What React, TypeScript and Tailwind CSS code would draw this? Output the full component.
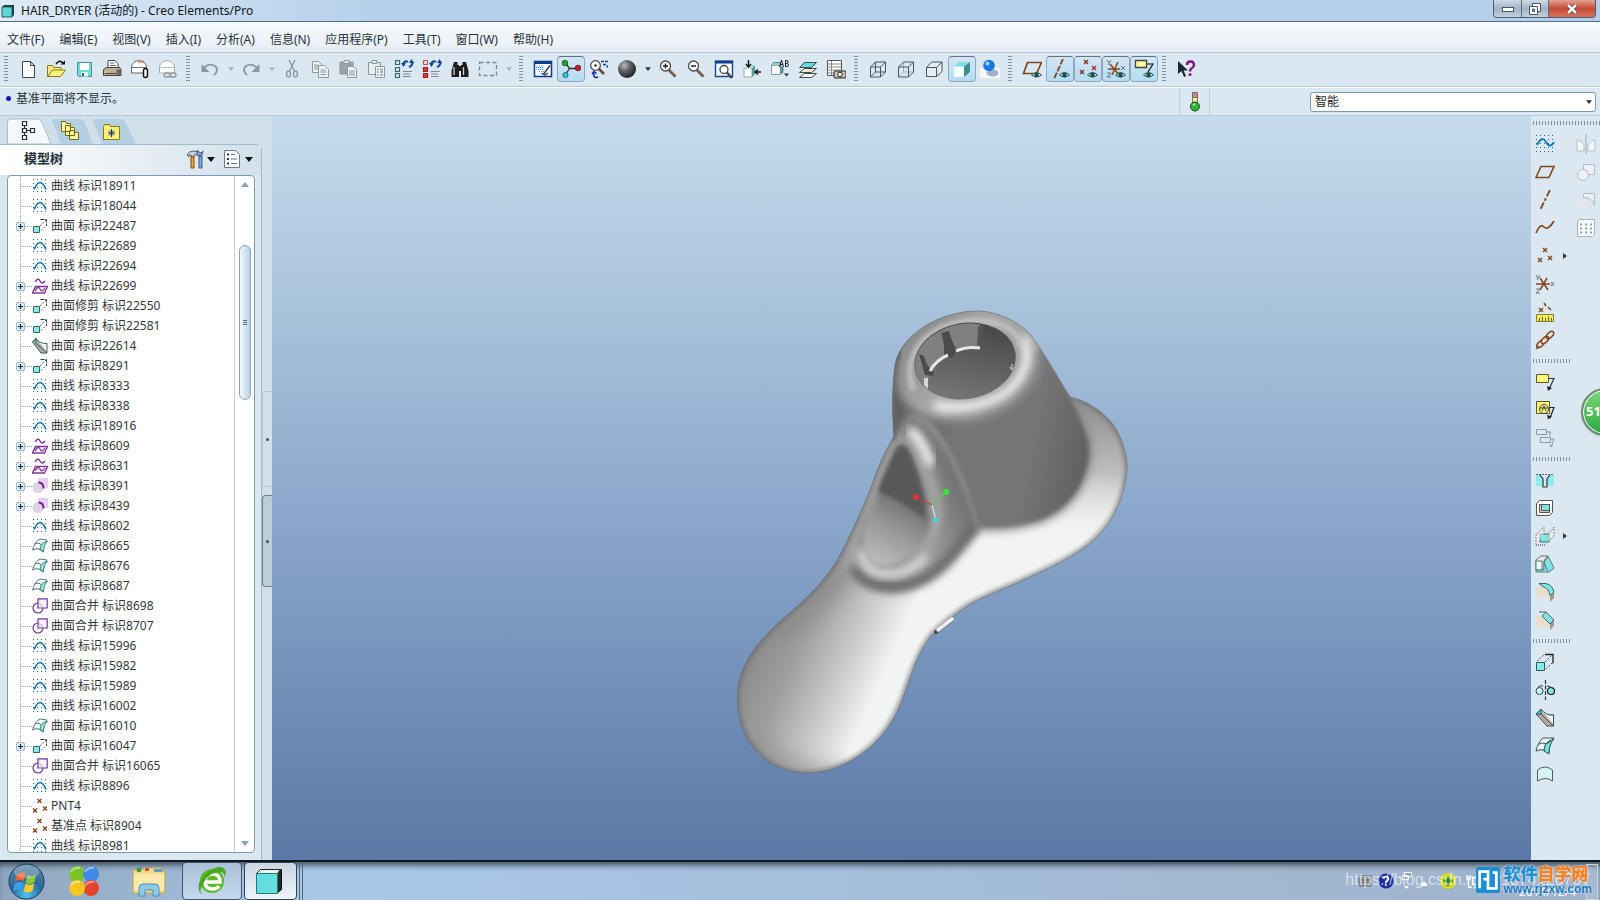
import type { ReactNode } from "react";

const ink = "#2a3540";
const brown = "#80461c";
const gray = "#8d979e";

const cross = (x: number, y: number, c = brown) => (
  <path d={`M${x - 2} ${y - 2}l4 4M${x + 2} ${y - 2}l-4 4`} stroke={c} strokeWidth="1.4" />
);
const eye = (
  <g>
    <path d="M9.500 16q5-5 10 0q-5 4-10 0z" fill="#dff0ee" stroke="#24504c" strokeWidth="1" />
    <circle cx="14.500" cy="16" r="2.300" fill="#15504c" />
  </g>
);
const gridDots = (
  <path d="M1 1.500h18M1 5.500h18M1 9.500h18M1 13.500h18M1 17.500h18" stroke="#1c5fae" strokeDasharray="1 3" />
);
const cube = (x: number, y: number, s: number) => `M${x} ${y + 5}h${s}v${s}h-${s}zM${x} ${y + 5}l5-5h${s}v${s}l-5 5M${x + s} ${y + 5}l5-5`;
const magnifier = (
  <g>
    <path d="M11 11l6.500 6.500" stroke="#5a3c34" strokeWidth="2.600" />
    <path d="M11.500 11l6 6" stroke="#d9b6a0" strokeWidth=".8" />
    <circle cx="7.500" cy="7" r="5" fill="#fff" stroke="#4a4a4a" strokeWidth="1.300" />
  </g>
);
const printerDome = (c: string) => (
  <path d="M1.500 14V8q1-6 8-6.500 6 .5 7 6.500v6z" fill="#fff" stroke={c} />
);

const icons: Record<string, ReactNode> = {
  new: <path d="M4.500 2.500h8l4 4v12h-12zM12.500 2.500v4h4" fill="#fff" stroke="#3d454c" strokeLinejoin="round" />,
  open: (
    <g>
      <path d="M1.500 17.500v-11h5l1.500 2h7v3" fill="#f6ea86" stroke="#8d7c1c" />
      <path d="M1.500 17.500l5-6.500h13l-5 6.500z" fill="#fff27a" stroke="#8d7c1c" />
      <path d="M10 5q3.500-5 7-1" fill="none" stroke="#111" strokeWidth="1.400" />
      <path d="M14.500 5.500h4.500V1.500z" fill="#111" />
    </g>
  ),
  save: (
    <g>
      <path d="M3.500 3.500h14v14H5l-1.500-1.500z" fill="#6fdcdc" stroke="#4b8f98" />
      <path d="M6 4h9v7H6z" fill="#fff" />
      <path d="M7 13h7v4.500H7z" fill="#e8f8f8" />
      <path d="M8 14h2v3H8z" fill="#2b6f78" />
    </g>
  ),
  print: (
    <g>
      <path d="M6 9V1.500h7l3 3V9z" fill="#fff" stroke="#444" />
      <path d="M8 4h4M8 6.500h6" stroke="#666" />
      <path d="M1.500 10.500l3-2h13l1.500 2v6h-17.500z" fill="#b7b09c" stroke="#46423a" />
      <path d="M3 14.500h11" stroke="#46423a" />
      <path d="M3 13h3" stroke="#e5c33b" strokeWidth="1.500" />
      <path d="M14.500 11v5.500l4.500-1.500v-5z" fill="#6d675a" />
    </g>
  ),
  printClip: (
    <g>
      {printerDome("#666")}
      <path d="M8 3h6" stroke="#d44" />
      <path d="M2 8.500h14" stroke="#777" />
      <rect x="13.500" y="9.500" width="4" height="9" rx="2" fill="#eee" stroke="#111" strokeWidth="1.400" />
    </g>
  ),
  printLink: (
    <g>
      {printerDome("#a6aeb4")}
      <path d="M2 8.500h14" stroke="#b6bec4" />
      <rect x="6" y="14" width="6" height="4" rx="2" fill="#dde3e8" stroke="#8f989e" strokeWidth="1.300" />
      <rect x="12" y="14" width="6" height="4" rx="2" fill="#dde3e8" stroke="#8f989e" strokeWidth="1.300" />
    </g>
  ),
  undo: (
    <g>
      <path d="M4 9q5-5.500 11-2q4.500 4-1 9" fill="none" stroke={gray} strokeWidth="1.900" />
      <path d="M1.500 5v8h8z" fill={gray} />
    </g>
  ),
  redo: (
    <g>
      <path d="M16 9q-5-5.500-11-2q-4.500 4 1 9" fill="none" stroke={gray} strokeWidth="1.900" />
      <path d="M18.500 5v8h-8z" fill={gray} />
    </g>
  ),
  cut: (
    <g fill="none" stroke={gray} strokeWidth="1.400">
      <path d="M7 1l5.500 11M13 1L7.500 12" />
      <ellipse cx="6.500" cy="15" rx="2" ry="3" />
      <ellipse cx="13.500" cy="15" rx="2" ry="3" />
    </g>
  ),
  copy: (
    <g fill="#eef3f7" stroke={gray}>
      <path d="M2.500 2.500h6l3 3v8h-9z" />
      <path d="M8.500 6.500h6l4 4v8h-10z" />
      <path d="M4 6h4M4 8h4M4 10h4M10.500 11h5M10.500 13h6M10.500 15.500h6" />
    </g>
  ),
  paste: (
    <g stroke={gray}>
      <path d="M2 3h13v12H2z" fill="#9aa3aa" />
      <path d="M6 1.500h5v3H6z" fill="#dfe6ea" />
      <path d="M9.500 7.500h6l3 3v8h-9z" fill="#f2f6f9" />
      <path d="M11 12h6M11 14h6M11 16h6" />
    </g>
  ),
  pasteSpecial: (
    <g stroke={gray}>
      <path d="M2.500 3.500h12v12h-12z" fill="#e6edf2" />
      <path d="M6 1.500h5v3H6z" fill="#dfe6ea" />
      <path d="M9.500 7.500h9v11h-9z" fill="#f2f6f9" />
      <path d="M11 10.500h1.500M14 10.500h3M11 13h1.500M14 13h3M11 16h1.500M14 16h3" strokeWidth="1.300" />
    </g>
  ),
  regen: (
    <g>
      <path d="M1.500 1.500h4v4h-4zM1.500 8.500h4v4h-4zM1.500 14.500h4v4h-4z" fill="#c8e6e6" stroke="#3a6670" strokeWidth="1.200" />
      <path d="M9 5q2-4 5-2M19 3q-1 4-4 5" fill="none" stroke="#12489c" strokeWidth="2" />
      <path d="M7 4h5l-2.500 4zM15 4h5l-2.500-4z" fill="#12489c" />
      <path d="M9 12.500h9M9 15h7M9 17.500h8" stroke="#7f8a92" />
    </g>
  ),
  regenRed: (
    <g>
      <path d="M1.500 1.500h4v4h-4z" fill="#f0d8d8" stroke="#a55" />
      <path d="M1.500 8.500h4v4h-4zM1.500 14.500h4v4h-4z" fill="#e33" stroke="#922" strokeWidth="1.200" />
      <path d="M9 5q2-4 5-2M19 3q-1 4-4 5" fill="none" stroke="#12489c" strokeWidth="2" />
      <path d="M7 4h5l-2.500 4zM15 4h5l-2.500-4z" fill="#12489c" />
      <path d="M9 12.500h9M9 15h7M9 17.500h8" stroke="#7f8a92" />
    </g>
  ),
  find: (
    <g fill="#1d1d1d">
      <path d="M4 3h3.500v3H9v12H1.500v-6zM12.500 3H16l2.500 9v6H11V6h1.500z" />
      <path d="M8 7h4v5H8z" />
      <path d="M4 8v8M13.500 8v8" stroke="#d8d4b8" strokeWidth="1.300" />
    </g>
  ),
  selectBox: <path d="M1.500 3.500h17v13h-17z" fill="none" stroke="#7e888f" strokeWidth="1.300" strokeDasharray="4 2.500" />,
  repaint: (
    <g>
      <path d="M1.500 2.500h17v15h-17z" fill="#f7fbff" stroke="#0e3f86" strokeWidth="1.500" />
      <path d="M1 2h18v3H1z" fill="#0e3f86" />
      <path d="M2 6h9v5H2z" fill="#cfe2f6" />
      <path d="M3 8.500h7M5 10.500h6M6 12.500h5M8 14.500h3" stroke="#5a8acc" strokeDasharray="1 1" />
      <path d="M17 6.500l-6 8M9 14.500l3 1.500 3-2" fill="none" stroke="#333" strokeWidth="1.300" />
    </g>
  ),
  spin: (
    <g>
      <path d="M4.500 4l4 5.500h8M8.500 9.500l-4 6" fill="none" stroke="#333" strokeWidth="1.300" />
      <circle cx="4" cy="4" r="2.800" fill="#1fa32c" stroke="#0b5512" strokeWidth=".8" />
      <circle cx="17" cy="9" r="2.800" fill="#c41f2b" stroke="#6d0b12" strokeWidth=".8" />
      <circle cx="4.500" cy="16" r="2.600" fill="#35c8d8" stroke="#0c5c68" strokeWidth=".8" />
    </g>
  ),
  orient: (
    <g>
      <path d="M9 9l6 6" stroke="#6b4a35" strokeWidth="2.600" />
      <circle cx="6.500" cy="6.500" r="4.800" fill="#fff" stroke="#444" strokeWidth="1.200" />
      <circle cx="6.500" cy="6.500" r="1.300" fill="#333" />
      <path d="M12 2.500h7M14 5.500h3q2 1 1 3" fill="none" stroke="#1c3d96" strokeWidth="1.500" strokeDasharray="3 1" />
      <path d="M9 18q-5 2-4-4M3 15l2-2.500 2.500 2" fill="none" stroke="#1526b0" strokeWidth="1.600" />
    </g>
  ),
  sphere: <circle cx="10" cy="10" r="9" fill="url(#sphereShade)" />,
  zoomIn: (
    <g>
      {magnifier}
      <path d="M7.500 4.500v5M5 7h5" stroke="#222" strokeWidth="1.500" />
    </g>
  ),
  zoomOut: (
    <g>
      {magnifier}
      <path d="M5 7h5" stroke="#222" strokeWidth="1.500" />
    </g>
  ),
  refit: (
    <g>
      <path d="M1.500 2.500h17v15h-17z" fill="#eef6ff" stroke="#17498c" strokeWidth="1.400" />
      <path d="M1 1.500h18v3H1z" fill="#0e3f86" />
      <path d="M12.500 13l5.500 6" stroke="#5a3c34" strokeWidth="2.400" />
      <circle cx="10" cy="10.500" r="4" fill="#fff" stroke="#444" strokeWidth="1.300" />
    </g>
  ),
  reorient: (
    <g>
      <path d="M2 9h8v9H2z" fill="#fff" stroke="#9aa" />
      <path d="M10 9l3-3v9l-3 3z" fill="#4f9d9d" />
      <path d="M2 9l3-3h8l-3 3z" fill="#9fe0e0" />
      <path d="M6.500 1v6M4 5l2.500 3L9 5M19 13h-5M16 10.500l-3 2.500 3 2.500" fill="none" stroke="#111" strokeWidth="1.400" />
    </g>
  ),
  saved: (
    <g>
      <path d="M1.500 6.500h9v9h-9z" fill="#fff" stroke="#8a9a9a" />
      <path d="M1.500 6.500l2-3h6l1 3" fill="#8fd6d6" stroke="#6a8a8a" />
      <path d="M10.500 6.500l3 2v5l-3 2" fill="#5a8a8c" />
      <path d="M9.500 8l2-7 2 7M10 5.500h3M15.500 1.500v6h2q2-1.500 0-3 1.500-1.500 0-3zM15.500 4.500h2" fill="none" stroke="#222" />
      <path d="M14 14.500h5l-2.500 3z" fill="#333" />
    </g>
  ),
  layers: (
    <g stroke="#3b4a50">
      <path d="M1.500 18.500l5-4h12l-5 4z" fill="#fff" />
      <path d="M1.500 13.500l5-4h12l-5 4z" fill="#ffe7c8" />
      <path d="M1.500 8.500l5-5h12l-5 5z" fill="#62dcdc" />
    </g>
  ),
  viewMgr: (
    <g>
      <path d="M1.500 1.500h14v15h-14z" fill="#fff" stroke="#555" />
      <path d="M2 5h13M2 8h13M2 11h13M2 14h13M5.500 2v14" stroke="#888" />
      <rect x="8" y="12" width="12" height="7" rx="1" fill="#c8bfae" stroke="#26221c" />
      <circle cx="14" cy="15.500" r="2.300" fill="#fff" stroke="#26221c" />
    </g>
  ),
  wire: (
    <g fill="none" stroke="#4b545a">
      <path d={cube(2.500, 3, 10)} />
      <path d="M7.500 3v10h10M7.500 13l-5 5" />
    </g>
  ),
  hidden: (
    <g fill="none">
      <path d="M7.500 3v10h10M7.500 13l-5 5" stroke="#a3adb4" />
      <path d={cube(2.500, 3, 10)} stroke="#4b545a" />
    </g>
  ),
  noHidden: <path d="M2.500 8.500h10v9h-10zM2.500 8.500l5-5.500h10.500l-5.500 5.500M18 3v9.500l-5.500 5" fill="#e6eef4" stroke="#4b545a" />,
  shaded: (
    <g>
      <path d="M2 7.500h10v10.500H2z" fill="#f8fdff" />
      <path d="M2 7.500l5-4.500h11l-6 4.500z" fill="#7fe0e0" />
      <path d="M12 7.500L18 3v10l-6 5z" fill="#3f8f8c" />
    </g>
  ),
  ball: (
    <g>
      <path d="M0 9h20v10H0z" fill="#f4f8fb" />
      <ellipse cx="12.500" cy="14" rx="6" ry="3.500" fill="#9fb4cc" />
      <circle cx="9" cy="6.500" r="5.800" fill="#1878e0" />
      <circle cx="7.500" cy="4.500" r="2" fill="#9fd0ff" />
    </g>
  ),
  planeEye: (
    <g>
      <path d="M5.500 3.500h14l-5 11h-13z" fill="none" stroke={brown} strokeWidth="1.700" />
      {eye}
    </g>
  ),
  axisEye: (
    <g>
      <path d="M13 0L4 20" stroke={brown} strokeWidth="1.800" strokeDasharray="6 1.500" />
      {eye}
    </g>
  ),
  pointEye: (
    <g>
      {cross(8, 3, "#8c2f1c")}
      {cross(4, 13, "#8c2f1c")}
      {cross(16, 9, "#a02a2a")}
      {eye}
    </g>
  ),
  csysEye: (
    <g>
      <path d="M2 10h12M4 5l9 11M12 3L6 16" stroke={brown} strokeWidth="1.500" />
      <path d="M1 1l2 3M5 1L2 6M1 14h4l-4 4h4M15 7l4 4M19 7l-4 4" stroke="#6c7478" fill="none" />
      {eye}
    </g>
  ),
  noteEye: (
    <g>
      <path d="M1.500 1.500h11v7h-11z" fill="#fbf79a" stroke="#444" strokeWidth="1.300" />
      <path d="M13 5h6l-5 8" fill="none" stroke="#111" strokeWidth="1.200" />
      {eye}
    </g>
  ),
  help: (
    <g>
      <path d="M2 2v13l3.500-3 2.500 6 2-1-2.500-5.500H12z" fill="#1d2730" />
      <path d="M11 6q0-3.500 3.500-3.500T18 6q0 2-2 3t-2 3.500" fill="none" stroke="#7c1680" strokeWidth="2.400" />
      <circle cx="14" cy="15.500" r="1.500" fill="#7c1680" />
    </g>
  ),
  sketch: (
    <g>
      {gridDots}
      <path d="M2 11q5-10 9-3t8 0" fill="none" stroke="#1378b8" strokeWidth="1.900" />
    </g>
  ),
  plane: <path d="M6 4.500h13l-5 11h-13z" fill="none" stroke={brown} strokeWidth="1.600" />,
  axis: <path d="M15 0L5 20" stroke={brown} strokeWidth="1.800" strokeDasharray="7 2 3 2" />,
  curve: <path d="M1 15q4-10 8-6t10-6" fill="none" stroke={brown} strokeWidth="1.600" />,
  points: (
    <g>
      {cross(10, 4)}
      {cross(5, 14)}
      {cross(15, 12)}
    </g>
  ),
  csys: (
    <g>
      <path d="M1 10h14M5 4l8 12M12 4L5 16" stroke={brown} strokeWidth="1.500" />
      <path d="M1 1l2 3M5 1L2 6M1 15h4l-4 4h4M16 8l3 4M19 8l-3 4" stroke="#6c7478" fill="none" />
    </g>
  ),
  analysis: (
    <g>
      {cross(6, 8)}
      <path d="M9 1l2 3M13 5l3 3" stroke={brown} strokeWidth="1.500" />
      <path d="M1.500 12.500h17v7h-17z" fill="#f5ee62" stroke="#8a7d20" />
      <path d="M4.500 16v3M7.500 14.500v4.500M10.500 16v3M13.500 14.500v4.500M16.500 16v3" stroke="#6a6018" />
    </g>
  ),
  chain: (
    <g fill="none" stroke={brown} strokeWidth="1.500">
      <ellipse cx="5.500" cy="14" rx="4.500" ry="2.500" transform="rotate(-45 5.500 14)" />
      <ellipse cx="10" cy="10" rx="4.500" ry="2.500" transform="rotate(-45 10 10)" fill="#f1d4c4" />
      <ellipse cx="15" cy="5" rx="4.500" ry="2.500" transform="rotate(-45 15 5)" />
      <path d="M1 19l3-3" />
    </g>
  ),
  note: (
    <g>
      <path d="M1.500 2.500h12v8h-12z" fill="#fdf878" stroke="#5c5a2a" />
      <path d="M14 6.500h5L14 17" fill="none" stroke="#25304a" strokeWidth="1.200" />
      <path d="M12 14l1 5 4-3z" fill="#222" />
    </g>
  ),
  noteA: (
    <g>
      <path d="M1.500 1.500h13v12h-13z" fill="#fdf878" stroke="#5c5a2a" />
      <circle cx="9" cy="9" r="4.500" fill="none" stroke="#444" />
      <path d="M7 11l2-5 2 5M5 8h8" stroke="#444" fill="none" />
      <path d="M15 7.500h4L15 18" fill="none" stroke="#222" strokeWidth="1.200" />
      <path d="M12 15l1 4.500 4-3z" fill="#222" />
    </g>
  ),
  noteGray: (
    <g fill="none" stroke={gray}>
      <path d="M1.500 1.500h10v5h-10zM5.500 9.500h10v5h-10zM12 4h3.500l-1 4M16 11h3l-3 8M14 17l2 2 2-2" />
    </g>
  ),
  hole: (
    <g>
      <path d="M1 5h4l3 4v7H1zM19 5h-4l-3 4v7h7z" fill="#8eecec" />
      <path d="M1 4.500h18" stroke="#567" strokeDasharray="2 1" />
      <path d="M5 5l3 4v8h4V9l3-4" fill="none" stroke="#333" strokeWidth="1.200" />
    </g>
  ),
  shell: (
    <g stroke="#5a5450">
      <path d="M1.500 5.500l3-3h13v12l-3 3h-13z" fill="#fff" />
      <path d="M4.500 6.500h10v8h-10z" fill="#d9cdbf" />
      <path d="M6.500 6.500h8v6h-8z" fill="#7fe6e6" />
    </g>
  ),
  rib: (
    <g>
      <path d="M5 8h9v8H5z" fill="#7fe6e6" stroke="#466" />
      <path d="M1 19V9l8-8v6M13 9l6-8v9l-6 6" fill="#f6f1ea" fillOpacity=".5" stroke="#888" strokeDasharray="2 1" />
      <path d="M1 19h10" stroke="#333" strokeDasharray="1 1" />
    </g>
  ),
  draft: (
    <g stroke="#5a7a7a">
      <path d="M1 6l5-4h7L9 7v9H1z" fill="#efe6dc" />
      <path d="M1 7h6v9H1z" fill="#e4fafa" />
      <path d="M9 7l4-5 6 12-5 4H1v-2h8z" fill="#7fe6e6" />
      <path d="M13 2l-4 6 4 10" fill="none" />
    </g>
  ),
  round: (
    <g>
      <path d="M1 5h7q6 2 7 9v5l-4-4q-4 1-10 0z" fill="#e9ddd0" />
      <path d="M15 12l4-2v6l-4 4z" fill="#a59a8c" />
      <path d="M4 1.500h7q7 2 8 9l-4 3q-1-7-7-9z" fill="#7fe6e6" stroke="#466" />
    </g>
  ),
  chamfer: (
    <g>
      <path d="M1 6h6l8 8v5q-7-3-14-3z" fill="#e9ddd0" />
      <path d="M15 13l4-2v5l-4 4z" fill="#a59a8c" />
      <path d="M4 2h7M7 6l4-4 8 8-4 4z" fill="#7fe6e6" stroke="#466" />
    </g>
  ),
  extrude: (
    <g>
      <path d="M1.500 10.500h8v8h-8z" fill="#7ff0ee" stroke="#3a5054" />
      <path d="M2 9l8-7M10 10l7-7M11 17l7-7" stroke="#555" strokeDasharray="2 1.500" />
      <path d="M10 2.500h8v9" fill="none" stroke="#222" strokeWidth="1.300" />
    </g>
  ),
  revolve: (
    <g>
      <path d="M10.500 0v20" stroke="#333" strokeWidth="1.200" strokeDasharray="4 1.500" />
      <circle cx="4.500" cy="11" r="3.500" fill="#c8f0f0" stroke="#345" />
      <circle cx="16" cy="11" r="3.500" fill="#7fe6e6" stroke="#222" strokeWidth="1.200" />
      <path d="M12 6q4 0 6 3M3 7q2-2 5-1" fill="none" stroke="#345" />
    </g>
  ),
  sweep: (
    <g>
      <path d="M1 6l5-5 3 5h10v12h-7z" fill="#b7aaa0" />
      <path d="M6 1q5 7 13 6v10z" fill="#f2f8f8" />
      <path d="M1 6l5-5v5z" fill="#45d8d8" />
      <path d="M6 1q5 7 12.500 6v11H12L1 6l5-5v5l12 12M1 6h5" fill="none" stroke="#355052" />
    </g>
  ),
  boundary: (
    <g stroke="#355052">
      <path d="M1 15q2-9 7-13h11q-5 4-5 15l-5-3q-4-1-8 1z" fill="#eefafa" />
      <path d="M10 9q3-5 9-6-5 5-5 15l-5-3z" fill="#6fe4e4" />
      <path d="M4 8q5-2 7 0l5-3" fill="none" />
    </g>
  ),
  fill: <path d="M2.500 6q7-6 15 0v11q-7-5-15 0z" fill="#d5f3f3" stroke="#4a6064" />,
  mirrorG: (
    <g fill="#f2f6f9" stroke="#b3bec8">
      <path d="M1 17V6q4 0 7 5v6zM19 17V6q-4 0-7 5v6z" />
      <path d="M10 0v20" strokeWidth="1.500" />
    </g>
  ),
  mergeG: (
    <g fill="#eaf0f5" stroke="#b3bec8">
      <path d="M7.500 2.500h11v10h-11z" />
      <circle cx="7" cy="13" r="5.500" />
    </g>
  ),
  trimG: (
    <g fill="#eaf0f5">
      <circle cx="7" cy="13" r="6" fill="#e3e6ec" />
      <path d="M7.500 3.500h11v12q-2-8-11-8z" stroke="#b3bec8" />
    </g>
  ),
  patternG: (
    <g stroke="#a9b3bd">
      <path d="M1.500 3.500l2-2h15v15l-2 2h-15z" fill="#f7fafc" />
      <path d="M4 6.500h12M4 10.500h12M4 14.500h12" strokeWidth="1.800" strokeDasharray="2 3" stroke="#98a4b0" />
    </g>
  ),
};

function Icon({ name }: { name: string }) {
  return (
    <svg viewBox="0 0 20 20" className="size-5 shrink-0" aria-hidden="true">
      {icons[name]}
    </svg>
  );
}

function ToolButton({ name, pressed }: { name: string; pressed?: boolean }) {
  return (
    <button
      aria-label={name}
      aria-pressed={pressed}
      className={
        pressed
          ? "flex h-[26px] w-7 items-center justify-center rounded-sm border border-[#8fa9bb] border-t-[#5f7482] bg-linear-to-b from-[#d3e6f4] to-[#b3dcf4]"
          : "flex h-[26px] w-7 items-center justify-center"
      }
    >
      <Icon name={name} />
    </button>
  );
}

function Caret({ dim }: { dim?: boolean }) {
  return (
    <button aria-label="more" className="flex w-[13px] justify-center">
      <svg viewBox="0 0 8 5" className="h-1 w-1.5">
        <path d="M0 0h8L4 5z" fill={dim ? "#a9b3ba" : ink} />
      </svg>
    </button>
  );
}

function Grip() {
  return (
    <span className="flex h-7 w-3.5 shrink-0 items-center pl-1">
      <span className="h-7 w-1 bg-[radial-gradient(circle,#7f93a3_0.8px,transparent_1px)] bg-size-[2px_3px]" />
    </span>
  );
}

function HGrip({ wide }: { wide?: boolean }) {
  return (
    <span className={wide ? "flex h-3.5 w-full items-center pl-px" : "flex h-3.5 w-10 items-center pl-px"}>
      <span className="h-1 w-full bg-[radial-gradient(circle,#7f93a3_0.8px,transparent_1px)] bg-size-[3px_2px]" />
    </span>
  );
}

const toolbar = [
  ["new", "open", "save", "print", "printClip", "printLink"],
  ["undo", "v", "redo", "v", "cut", "copy", "paste", "pasteSpecial", "regen", "regenRed", "find", "selectBox", "v"],
  ["repaint", "spin*", "orient", "sphere", "V", "zoomIn", "zoomOut", "refit", "reorient", "saved", "layers", "viewMgr"],
  ["wire", "hidden", "noHidden", "shaded*", "ball"],
  ["planeEye", "axisEye*", "pointEye*", "csysEye*", "noteEye*"],
  ["help"],
];

const menus = ["文件(F)", "编辑(E)", "视图(V)", "插入(I)", "分析(A)", "信息(N)", "应用程序(P)", "工具(T)", "窗口(W)", "帮助(H)"];

const treeIcons: Record<string, ReactNode> = {
  curve: (
    <g>
      <path d="M1 1.500h14M1 5.500h14M1 9.500h14M1 13.500h14" stroke="#2a6ab0" strokeDasharray="1 3" />
      <path d="M2 11.500Q8-2.500 14 11.500" fill="none" stroke="#1470ac" strokeWidth="1.700" />
    </g>
  ),
  extrude: (
    <g>
      <path d="M1.500 8.500h6v6h-6z" fill="#86ecea" stroke="#3a6064" />
      <path d="M9 12.500l5-5M8 8l6-6" stroke="#567" strokeDasharray="2 1.500" />
      <path d="M8.500 1.500h6V8" fill="none" stroke="#243" strokeDasharray="4 1" />
    </g>
  ),
  wave: (
    <g fill="none" stroke="#84349a" strokeWidth="1.400">
      <path d="M3 4q3-5 5-1t5 0" />
      <path d="M3.500 8.500h12l-3 6.500H.5z" />
      <path d="M3 13q3-6 5-2t5-1" />
    </g>
  ),
  sweep: (
    <g>
      <path d="M0 4l4-4 4 5h7v10H9z" fill="#b5aca6" />
      <path d="M4 0q3 6 11 5.500V14z" fill="#f0f9f8" />
      <path d="M0 4l4-4v5z" fill="#4cc9bc" />
      <path d="M.5 4L4 .5q4 5.500 11 5v9.500H9zM4 .5v5l11 9.500" fill="none" stroke="#3e625c" />
    </g>
  ),
  project: (
    <g>
      <path d="M6 0h10v10H6z" fill="#e6cfee" />
      <circle cx="6" cy="9.500" r="5.500" fill="#ddd3e4" />
      <path d="M6.500 4.500q5 0 5 6" fill="none" stroke="#6d1f86" strokeWidth="2" />
    </g>
  ),
  surface: (
    <g stroke="#4c7a7a">
      <path d="M.5 12Q3 3 8 1l7 1q-4 4-4 12l-4-3q-3-1-6.500 1z" fill="#f8fdfd" />
      <path d="M9 7.500q2-4 6.500-4-4 3-4 10.500l-3.500-3z" fill="#8fe9e6" />
      <path d="M3 6q5-2 6 1" fill="none" />
    </g>
  ),
  merge: (
    <g stroke="#6a3a9a" strokeWidth="1.200">
      <circle cx="6" cy="10" r="5" fill="#fff" />
      <path d="M6 .8h9.200V10H6z" fill="#f8f0fb" />
      <path d="M7 5.500a5 5 0 0 1 3.500 3.500" fill="none" stroke="#cda8dc" />
    </g>
  ),
  points: (
    <g>
      {cross(7.500, 3)}
      {cross(3, 12.500)}
      {cross(13, 10.500)}
    </g>
  ),
};

type Row = [icon: string, label: string, expandable?: boolean];
const rows: Row[] = [
  ["curve", "曲线 标识18911"],
  ["curve", "曲线 标识18044"],
  ["extrude", "曲面 标识22487", true],
  ["curve", "曲线 标识22689"],
  ["curve", "曲线 标识22694"],
  ["wave", "曲线 标识22699", true],
  ["extrude", "曲面修剪 标识22550", true],
  ["extrude", "曲面修剪 标识22581", true],
  ["sweep", "曲面 标识22614"],
  ["extrude", "曲面 标识8291", true],
  ["curve", "曲线 标识8333"],
  ["curve", "曲线 标识8338"],
  ["curve", "曲线 标识18916"],
  ["wave", "曲线 标识8609", true],
  ["wave", "曲线 标识8631", true],
  ["project", "曲线 标识8391", true],
  ["project", "曲线 标识8439", true],
  ["curve", "曲线 标识8602"],
  ["surface", "曲面 标识8665"],
  ["surface", "曲面 标识8676"],
  ["surface", "曲面 标识8687"],
  ["merge", "曲面合并 标识8698"],
  ["merge", "曲面合并 标识8707"],
  ["curve", "曲线 标识15996"],
  ["curve", "曲线 标识15982"],
  ["curve", "曲线 标识15989"],
  ["curve", "曲线 标识16002"],
  ["surface", "曲面 标识16010"],
  ["extrude", "曲面 标识16047", true],
  ["merge", "曲面合并 标识16065"],
  ["curve", "曲线 标识8896"],
  ["points", "PNT4"],
  ["points", "基准点 标识8904"],
  ["curve", "曲线 标识8981"],
];

function TreeRow({ row: [icon, label, expandable] }: { row: Row }) {
  return (
    <li className="flex h-5 items-center">
      <svg viewBox="0 0 24 20" className="h-5 w-6 shrink-0" aria-hidden="true">
        <path d="M12.500 0v20M13 10.500h11" stroke="#9aa0a4" strokeDasharray="1 1" />
        {expandable && (
          <g>
            <rect x="8.500" y="6.500" width="8" height="8" rx="1.500" fill="#dceaf5" stroke="#9cb8c8" />
            <path d="M12.500 8v5M10 10.500h5" stroke="#1a2c38" strokeWidth="1.200" />
          </g>
        )}
      </svg>
      <svg viewBox="0 0 16 16" className="mr-[3px] size-4 shrink-0" aria-hidden="true">
        {treeIcons[icon]}
      </svg>
      <span className="whitespace-nowrap">{label}</span>
    </li>
  );
}

function ModelTree() {
  return (
    <aside className="flex w-[272px] shrink-0 bg-[#d0e0eb]">
      <div className="flex w-[262px] flex-col">
        <div className="flex h-7 items-end pl-[7px]" role="tablist">
          <button role="tab" aria-label="模型树" aria-selected="true" className="h-[26px] w-[45px]">
            <svg viewBox="0 0 45 26" className="h-full w-full">
              <path d="M.5 26V4Q.5 1 4 1h26q3 0 5 3l9 22z" fill="#f5f9fc" stroke="#a9bfce" />
              <path d="M15.500 3.500h4v4h-4zM15.500 10.500h4v4h-4zM15.500 17.500h4v4h-4zM23.500 10.500h4v4h-4zM17.500 7.500v3M17.500 14.500v3M19.500 12.500h4" fill="#fff" stroke="#23303a" strokeWidth="1.200" />
            </svg>
          </button>
          <button role="tab" aria-label="文件夹" className="h-[26px] w-[41px]">
            <svg viewBox="0 0 41 26" className="h-full w-full">
              <path d="M0 3q0-2 3-2h24q4 0 6 4l8 21H9z" fill="#b4cee2" />
              <path d="M9.500 3.500h4l1 2h4v8h-9zM13.500 7.500h4l1 2h4v8h-9zM17.500 12.500h4l1 2h4v7h-9z" fill="#fdf6a0" stroke="#7a6a14" />
            </svg>
          </button>
          <button role="tab" aria-label="收藏夹" className="h-[26px] w-[44px]">
            <svg viewBox="0 0 44 26" className="h-full w-full">
              <path d="M0 3q0-2 3-2h24q4 0 6 4l10 21H9z" fill="#b4cee2" />
              <path d="M10.500 8.500l1-2h5l1 2h9v13h-16z" fill="#fdf178" stroke="#8a7a1c" />
              <path d="M18.500 11v8M15 15h7M16 12.500l5 5M21 12.500l-5 5" stroke="#1a3578" />
            </svg>
          </button>
        </div>
        <div className="flex min-h-0 flex-1 flex-col rounded-tr-md border-t border-r border-[#a5bac8] bg-[#dce8f0]">
          <div className="flex h-[30px] shrink-0 items-center bg-linear-to-r from-white to-[#d2e0ea] pr-2 pb-0.5 pl-6">
            <h2 className="flex-1 text-[13px] font-bold text-[#23303a]">模型树</h2>
            <button aria-label="设置" className="flex items-center gap-0.5">
              <svg viewBox="0 0 20 20" className="size-5">
                <path d="M2 6q2-4 6-4l5 1v3H9v2H6V6H4v2z" fill="#c9d2d8" stroke="#5b6368" />
                <path d="M6 8h3v11H6z" fill="#f0a432" stroke="#7a4a10" />
                <path d="M12 1v4l2 2 3-1 1-4-2 2-2-1zM14 7h3v12h-3z" fill="#7fa8e0" stroke="#3d567a" />
              </svg>
              <svg viewBox="0 0 8 5" className="h-[5px] w-2"><path d="M0 0h8L4 5z" fill="#111" /></svg>
            </button>
            <button aria-label="显示" className="ml-2 flex items-center gap-1">
              <svg viewBox="0 0 18 20" className="h-5 w-[18px]">
                <path d="M1.500 1.500h11l4 4v13h-15z" fill="#fafdfd" stroke="#6c7c84" />
                <path d="M4 5.500h2M4 10h2M4 14.500h2" stroke="#333" strokeWidth="2" />
                <path d="M8 5.500h4M8 10h6M8 14.500h6" stroke="#678" />
              </svg>
              <svg viewBox="0 0 8 5" className="h-[5px] w-2"><path d="M0 0h8L4 5z" fill="#111" /></svg>
            </button>
          </div>
          <div className="mr-1.5 mb-[7px] ml-[7px] flex min-h-0 flex-1 overflow-hidden rounded-sm border border-[#7d9cb2] bg-white text-xs text-[#34393d]">
            <ul className="min-w-0 flex-1 overflow-hidden">
              {rows.map((r) => (
                <TreeRow key={r[1]} row={r} />
              ))}
            </ul>
            <div className="flex w-5 flex-col items-center border-l border-[#c3d0d8] py-1.5">
              <svg viewBox="0 0 8 5" className="h-[5px] w-2"><path d="M0 5h8L4 0z" fill="#8aa2b0" /></svg>
              <div className="mt-[58px] flex h-[155px] w-3 flex-col items-center justify-center gap-px rounded-full border border-[#8ba6b8] bg-linear-to-r from-[#f2f8fc] to-[#b9d2e6]">
                <span className="h-px w-1 bg-[#56707f]" />
                <span className="h-px w-1 bg-[#56707f]" />
                <span className="h-px w-1 bg-[#56707f]" />
              </div>
              <span className="flex-1" />
              <svg viewBox="0 0 8 5" className="h-[5px] w-2"><path d="M0 0h8L4 5z" fill="#8aa2b0" /></svg>
            </div>
          </div>
        </div>
      </div>
      <div className="flex flex-1 flex-col items-end pt-[275px]">
        <button aria-label="折叠" className="flex h-24 w-2.5 items-center justify-center rounded-l-sm border border-r-0 border-[#b5c7d3]">
          <span className="size-[3px] rounded-full bg-[#3c5060]" />
        </button>
        <button aria-label="折叠树" className="mt-2 flex h-[92px] w-2.5 items-center justify-center rounded-l-sm border border-r-0 border-[#6c7f8d] bg-[#bccddb]">
          <span className="size-[3px] rounded-full bg-[#3c5060]" />
        </button>
      </div>
    </aside>
  );
}

const silhouette =
  "M973 311C990 310 1012 317 1027 331C1036 340 1050 364 1070 397C1086 400 1102 411 1112 423C1123 438 1128 457 1127 472C1124 497 1114 521 1097 537C1078 557 1040 572 1017 583C994 593 975 600 963 609C950 618 938 628 930 637C915 658 910 680 903 697C897 715 890 725 882 735C866 754 838 773 807 773C775 773 751 753 742 727C735 706 736 685 744 667C752 648 770 630 786 616C803 602 824 582 836 562C848 541 862 510 872 485C877 468 885 452 894 436C892 415 892 385 895 365C900 335 938 313 973 311Z";
const cone = "M1003 395C1030 365 1040 345 1043 350C1058 375 1075 403 1087 437C1092 456 1086 474 1077 490C1064 510 1045 520 1023 524C1008 527 990 528 980 526C974 503 962 470 950 450C940 430 925 412 912 415L893 440C890 412 893 390 897 370Z";
const pocketShape = "M898 446C888 470 872 508 865 535C862 555 870 565 885 566C908 563 926 545 930 522C928 500 920 475 911 454Q904 440 898 446z";

function HairDryer() {
  return (
    <svg viewBox="272 116 1259 744" className="h-full w-full" role="img" aria-label="HAIR_DRYER">
      <defs>
        <clipPath id="body"><path d={silhouette} /></clipPath>
        <clipPath id="bore"><ellipse cx="965" cy="361" rx="50" ry="37" transform="rotate(-10 965 361)" /></clipPath>
        <linearGradient id="handle" gradientUnits="userSpaceOnUse" x1="750" y1="640" x2="898" y2="705">
          <stop offset="0" stopColor="#888888" />
          <stop offset=".3" stopColor="#9f9f9f" />
          <stop offset=".6" stopColor="#cacbca" />
          <stop offset=".85" stopColor="#f2f5f4" />
          <stop offset="1" stopColor="#f1f4f3" />
        </linearGradient>
        <linearGradient id="flange" gradientUnits="userSpaceOnUse" x1="1080" y1="400" x2="1070" y2="540">
          <stop offset="0" stopColor="#8e8e8e" />
          <stop offset=".5" stopColor="#bebebe" />
          <stop offset="1" stopColor="#f2f4f4" stopOpacity="0" />
        </linearGradient>
        <linearGradient id="coneShade" gradientUnits="userSpaceOnUse" x1="890" y1="410" x2="1090" y2="450">
          <stop offset="0" stopColor="#5d5d5d" />
          <stop offset=".35" stopColor="#767676" />
          <stop offset=".7" stopColor="#767676" />
          <stop offset="1" stopColor="#606060" />
        </linearGradient>
        <linearGradient id="flank" gradientUnits="userSpaceOnUse" x1="915" y1="510" x2="962" y2="490">
          <stop offset="0" stopColor="#9a9a9a" />
          <stop offset="1" stopColor="#717171" />
        </linearGradient>
        <linearGradient id="rimShade" gradientUnits="userSpaceOnUse" x1="900" y1="330" x2="1010" y2="410">
          <stop offset="0" stopColor="#858585" />
          <stop offset=".5" stopColor="#a8a8a8" />
          <stop offset="1" stopColor="#8f8f8f" />
        </linearGradient>
        <linearGradient id="boreShade" gradientUnits="userSpaceOnUse" x1="985" y1="325" x2="955" y2="398">
          <stop offset="0" stopColor="#474747" />
          <stop offset="1" stopColor="#757575" />
        </linearGradient>
        <linearGradient id="pocket" gradientUnits="userSpaceOnUse" x1="918" y1="500" x2="882" y2="566">
          <stop offset="0" stopColor="#6a6a6a" />
          <stop offset=".5" stopColor="#979797" />
          <stop offset="1" stopColor="#bcbcbc" />
        </linearGradient>
        <filter id="b2" x="-20%" y="-20%" width="140%" height="140%"><feGaussianBlur stdDeviation="2" /></filter>
        <filter id="b4" x="-30%" y="-30%" width="160%" height="160%"><feGaussianBlur stdDeviation="4" /></filter>
        <filter id="b9" x="-60%" y="-60%" width="220%" height="220%"><feGaussianBlur stdDeviation="9" /></filter>
      </defs>
      <g clipPath="url(#body)">
        <path d={silhouette} fill="url(#handle)" />
        <path d="M1060 380h80v170h-110z" fill="url(#flange)" />
        <path d="M742 750Q770 785 830 782L856 766Q800 768 760 735z" fill="#8d8d8d" filter="url(#b9)" opacity=".6" />
        <path d="M842 550Q800 605 760 638L782 640Q830 610 852 580z" fill="#858585" filter="url(#b9)" opacity=".6" />
        <path d={silhouette} fill="none" stroke="#6c6c6c" strokeWidth="5" filter="url(#b2)" opacity=".7" />

        {/* soft contact shade where the nozzle meets the base */}
        <path d={cone} fill="#777" stroke="#8f8f8f" strokeWidth="8" filter="url(#b4)" />
        <path d={cone} fill="url(#coneShade)" filter="url(#b2)" />

        {/* flank and furrow around the grip opening */}
        <path d="M908 412C935 418 965 470 981 527C962 545 948 575 917 587C890 597 862 590 852 572C846 555 880 470 896 436z" fill="url(#flank)" filter="url(#b4)" />
        <path d="M976 526C960 544 943 573 913 583C890 591 866 587 852 568" fill="none" stroke="#666" strokeWidth="10" filter="url(#b4)" />
        <path d="M897 438C884 470 866 510 857 540C852 562 862 575 884 576C912 573 934 552 940 523C940 497 926 460 912 432z" fill="#989898" filter="url(#b2)" />
        <path d="M913 434C922 450 934 480 938 503C941 530 924 558 904 568" fill="none" stroke="#a8a8a8" strokeWidth="7" filter="url(#b4)" />
        <path d="M926 556C914 571 896 577 878 573C868 570 862 560 861 550" fill="none" stroke="#e6e6e6" strokeWidth="7" filter="url(#b4)" />
        <path d={pocketShape} fill="url(#pocket)" filter="url(#b2)" />
        <path d="M897 448C889 464 882 478 878 492Q900 499 924 519C926 500 919 478 911 458Q905 442 897 448z" fill="#585858" filter="url(#b2)" />
        <path d="M912 432Q921 438 930 462" fill="none" stroke="#fff" strokeWidth="8" strokeLinecap="round" filter="url(#b4)" />

        {/* nozzle rim */}
        <path d="M896 384C888 345 920 310 973 308C1012 308 1040 334 1041 362C1037 395 1000 421 960 421C925 421 902 409 896 384z" fill="url(#rimShade)" filter="url(#b4)" />
        <path d="M938 406C960 410 988 406 1008 391C1026 375 1031 356 1024 340" fill="none" stroke="#f5f6f6" strokeWidth="9" strokeLinecap="round" filter="url(#b4)" />
        <path d="M914 390C902 365 915 330 965 321C1000 318 1017 330 1022 346" fill="none" stroke="#c4c4c4" strokeWidth="5" filter="url(#b2)" />
        <path d="M893 440C890 400 892 370 900 350" fill="none" stroke="#666" strokeWidth="5" filter="url(#b2)" />
      </g>
      <ellipse cx="965" cy="361" rx="51" ry="38" transform="rotate(-10 965 361)" fill="url(#boreShade)" />
      <g clipPath="url(#bore)">
        <path d="M905 390L914 340Q940 315 980 322L980 348Q945 350 930 372Q926 390 929 400z" fill="#808080" />
        <path d="M941 333l8-2q3 12 8 19l-5 8-8-3q1-12-3-22zM919 354l5 2q2 10 10 16l-1 4-8-1z" fill="#4b4b4b" />
        <path d="M978 326l6 0q-4 10-4 20l-3 0z" fill="#555" />
        <path d="M956 351Q967 346 980 348" fill="none" stroke="#e6e6e6" strokeWidth="3" />
        <path d="M930 371Q936 360 948 355" fill="none" stroke="#e6e6e6" strokeWidth="3" />
        <path d="M926 378v14" stroke="#d5d5d5" strokeWidth="4" />
      </g>
      <path d="M1010 367l2 3v-6" stroke="#ddd" fill="none" />
      <path d={silhouette} fill="none" stroke="#5d6268" strokeWidth=".7" opacity=".7" />
      <path d="M936 632l15-12" stroke="#444" strokeWidth="4" strokeLinecap="round" />
      <path d="M938 630l14-11" stroke="#f3f3f3" strokeWidth="3.500" strokeLinecap="round" />
      <path d="M932 505l-16-8" stroke="#d33" strokeWidth="1" />
      <path d="M932 505l14-13" stroke="#3e3" strokeWidth="1" />
      <path d="M932 505l4 15" stroke="#bff" strokeWidth="1" />
      <circle cx="916" cy="497" r="3" fill="#e03338" />
      <circle cx="946" cy="492" r="3" fill="#2fea35" />
      <circle cx="936" cy="520" r="2.500" fill="#40d8dc" />
    </svg>
  );
}

function FlyButton({ name, more }: { name: string; more?: boolean }) {
  return (
    <div className="flex h-7 items-center">
      <ToolButton name={name} />
      {more && (
        <button aria-label={`${name} more`} className="ml-1">
          <svg viewBox="0 0 4 6" className="h-1.5 w-1"><path d="M0 0v6l4-3z" fill={ink} /></svg>
        </button>
      )}
    </div>
  );
}

function FeatureBar() {
  return (
    <aside className="flex w-[69px] shrink-0 flex-col bg-[#dbe8f2]">
      <HGrip wide />
      <div className="flex">
        <div className="flex w-[41px] flex-col">
          {["sketch", "plane", "axis", "curve", "points", "csys", "analysis", "chain"].map((n) => (
            <FlyButton key={n} name={n} more={n === "points"} />
          ))}
          <HGrip />
          {["note", "noteA", "noteGray"].map((n) => (
            <FlyButton key={n} name={n} />
          ))}
          <HGrip />
          {["hole", "shell", "rib", "draft", "round", "chamfer"].map((n) => (
            <FlyButton key={n} name={n} more={n === "rib"} />
          ))}
          <HGrip />
          {["extrude", "revolve", "sweep", "boundary", "fill"].map((n) => (
            <FlyButton key={n} name={n} />
          ))}
        </div>
        <div className="flex w-7 flex-col">
          {["mirrorG", "mergeG", "trimG", "patternG"].map((n) => (
            <FlyButton key={n} name={n} />
          ))}
        </div>
      </div>
    </aside>
  );
}

function Taskbar() {
  return (
    <footer className="relative flex h-10 shrink-0 items-stretch border-t-2 border-[#10161d] bg-linear-to-r from-[#8fa6bd] via-[#a9c8e8] via-20% to-[#9fb2ca] shadow-[inset_0_6px_6px_-3px_#3c4a58]">
      <button aria-label="开始" className="flex w-[60px] items-center pl-2">
        <svg viewBox="0 0 38 38" className="size-[37px]">
          <circle cx="19" cy="19" r="18" fill="url(#orb)" stroke="#1b3c58" />
          <path d="M9 12q5-4 9-1l-2 8q-4-3-9 0z" fill="#f0642c" />
          <path d="M20 12q4 3 9 0l-2 8q-5 3-9 0z" fill="#8cc63e" />
          <path d="M7 21q5-3 9 0l-2 8q-4-3-9 0z" fill="#38a0e8" />
          <path d="M18 21q4 3 9 0l-2 8q-5 3-9 0z" fill="#fccb2e" />
          <ellipse cx="19" cy="9" rx="13" ry="7" fill="#fff" opacity=".25" />
        </svg>
      </button>
      <button aria-label="360" className="flex w-12 items-center justify-center">
        <svg viewBox="0 0 32 32" className="size-8">
          <circle cx="9" cy="9" r="8" fill="#7cc22a" />
          <circle cx="23" cy="9" r="8" fill="#3f8ae6" />
          <circle cx="23" cy="23" r="8" fill="#e2442e" />
          <circle cx="9" cy="23" r="8" fill="#f8c51c" />
          <path d="M3 7q3-5 9-4M17 7q3-5 9-4M3 21q3-5 9-4M17 21q3-5 9-4" stroke="#fff" strokeWidth="2" opacity=".45" fill="none" />
        </svg>
      </button>
      <button aria-label="资源管理器" className="ml-4 flex w-[50px] items-center justify-center">
        <svg viewBox="0 0 34 32" className="h-8 w-[34px]">
          <path d="M1 5h9l2-2h18v3h3v22H1z" fill="#f3d98a" stroke="#c9a24c" />
          <path d="M5 3h4v4H5z" fill="#4a9a3a" />
          <path d="M13 3h4v3h-4z" fill="#d84a3a" />
          <path d="M22 4h8v3h-8z" fill="#5a9ad8" />
          <path d="M2 9h30v16H2z" fill="#fbeaae" />
          <path d="M7 31v-8q0-4 4-4h12q4 0 4 4v8h-6v-6h-8v6z" fill="#8ccbe8" stroke="#4c8fb4" />
        </svg>
      </button>
      <button aria-label="浏览器" className="ml-2 flex w-[60px] items-center justify-center rounded-sm border border-[#3f5468] bg-linear-to-b from-[#a9bfd6] to-[#c5daf0]">
        <svg viewBox="0 0 32 32" className="size-8">
          <circle cx="16" cy="16" r="12" fill="#5cb92c" />
          <path d="M9 17h15q0-8-7.500-8T9 17q0 7 8 7 4 0 6-3" fill="none" stroke="#fff" strokeWidth="3.500" />
          <path d="M4 28Q-1 16 12 7T29 5q2 3-1 7 1-5-4-5Q14 7 8 17T6 29z" fill="#49a81e" />
        </svg>
      </button>
      <button aria-label="Creo" className="ml-0.5 flex w-[53px] items-center justify-center rounded-sm border border-[#2f4354] bg-linear-to-b from-[#c9d6e2] to-[#eef4fa]">
        <svg viewBox="0 0 28 26" className="mr-1 h-[26px] w-7">
          <path d="M1.500 5.500l4-4h21v20l-4 3.500" fill="#222a2a" stroke="#111" />
          <path d="M1.500 5.500l4-4h20l-3 4z" fill="#e8f6f6" stroke="#222" />
          <path d="M1.500 5.500h21v20h-21z" fill="#63dede" stroke="#2a7a7a" />
        </svg>
      </button>
      <span className="ml-0.5 w-1 border-r border-l border-[#55697c]" />
      <div className="flex-1" />
      <div className="flex items-center gap-1.5 pr-[118px]" aria-label="托盘">
        <svg viewBox="0 0 14 12" className="h-3 w-3.5"><path d="M1 1h12v10H1zM1 5h12M1 8h12M5 1v10M9 1v10" fill="#aaa" stroke="#667" /></svg>
        <svg viewBox="0 0 16 16" className="size-4">
          <circle cx="8" cy="8" r="7.500" fill="#1c2c9c" />
          <path d="M5.500 6q0-2.500 2.500-2.500T10.500 6q0 1-1.500 2t-1 2M8 11.500v1.500" fill="none" stroke="#fff" strokeWidth="1.700" />
        </svg>
        <svg viewBox="0 0 14 20" className="h-5 w-3.5"><path d="M4.500 1.500h7v4h-7zM2.500 4.500h6v4h-6z" fill="#8aa0b8" stroke="#fff" /><path d="M4 15h5l-2.500 3z" fill="#fff" /></svg>
        <svg viewBox="0 0 8 5" className="mt-1 h-[5px] w-2"><path d="M0 5h8L4 0z" fill="#fff" /></svg>
        <svg viewBox="0 0 16 16" className="ml-1.5 size-4"><circle cx="8" cy="8" r="8" fill="#d5dc1c" /><path d="M3 8h10M8 3v10" stroke="#2c8a2a" strokeWidth="3" /></svg>
        <svg viewBox="0 0 16 16" className="ml-1 size-4"><path d="M1 2v4h3V2M2.500 6v8h3M6.500 4.500h9v7h-9zM8 14.500h6" fill="none" stroke="#fff" strokeWidth="1.300" /></svg>
      </div>
      <span className="absolute right-6 bottom-0 text-xs leading-4 text-white">2014/12/4</span>
      <span className="absolute right-0.5 bottom-0 h-9 w-3 border border-[#c8d6e4] bg-white/10" />
      <span className="absolute right-2.5 bottom-2.5 font-[Liberation_Sans] text-[16px] leading-5 whitespace-nowrap text-white/60">
        https://blog.csdn.net/y1374126767
      </span>
      <div className="absolute top-0.5 right-2 flex items-center gap-1">
        <svg viewBox="0 0 26 28" className="h-7 w-6">
          <rect width="26" height="28" rx="2" fill="#1c8fd0" />
          <path d="M4 23V5h9v8H8M13 13v10h9V6h-4" fill="none" stroke="#fff" strokeWidth="3" />
        </svg>
        <div className="flex flex-col">
          <span className="text-[17px] leading-[19px] font-black whitespace-nowrap text-[#1c8fd0] [text-shadow:0_0_2px_#fff]">
            软件<span className="text-[#f58220]">自学网</span>
          </span>
          <span className="font-[Liberation_Sans] text-[12px] leading-3 font-bold text-[#1479bd] [text-shadow:0_0_2px_#fff]">www.rjzxw.com</span>
        </div>
      </div>
    </footer>
  );
}

export default function App() {
  return (
    <div className="relative flex h-screen flex-col overflow-hidden bg-[#dbe8f2] font-['Noto_Sans','Noto_Sans_CJK_SC',sans-serif] text-xs text-[#27343f]">
      <svg className="absolute size-0" aria-hidden="true">
        <defs>
          <radialGradient id="sphereShade" cx=".35" cy=".3" r=".75">
            <stop offset="0" stopColor="#b8bcc0" />
            <stop offset=".45" stopColor="#5c6064" />
            <stop offset="1" stopColor="#1c1e20" />
          </radialGradient>
          <radialGradient id="orb" cx=".5" cy=".9" r=".9">
            <stop offset="0" stopColor="#4cc8f0" />
            <stop offset=".5" stopColor="#2a6a9c" />
            <stop offset="1" stopColor="#5a84a4" />
          </radialGradient>
        </defs>
      </svg>

      <header className="flex h-[22px] shrink-0 items-center border-b border-[#506f8c] bg-linear-to-r from-[#dfeaf5] via-[#b3cfea] via-25% to-[#b3cfea] pl-px">
        <svg viewBox="0 0 14 14" className="mr-1.5 size-3.5">
          <path d="M1 3l2-2h10v10l-2 2z" fill="#1d3c3c" />
          <path d="M1 3h10v10H1z" fill="#5ed6d4" stroke="#1f5c5c" />
        </svg>
        <h1 className="flex-1 text-[12px] leading-5 text-[#10181f]">HAIR_DRYER (活动的) - Creo Elements/Pro</h1>
        <div className="mr-1 flex h-[18px] self-start overflow-hidden rounded-b border border-t-0 border-[#4c5d70]">
          <button aria-label="最小化" className="flex w-7 items-center justify-center border-r border-[#5c6d80] bg-linear-to-b from-[#d0dbe8] via-[#a2b2c6] to-[#c2d0e0]">
            <svg viewBox="0 0 12 6" className="h-1.5 w-3"><rect x=".5" y="1.500" width="11" height="4" fill="#fff" stroke="#4a5564" /></svg>
          </button>
          <button aria-label="还原" className="flex w-[27px] items-center justify-center border-r border-[#5c6d80] bg-linear-to-b from-[#d0dbe8] via-[#a2b2c6] to-[#c2d0e0]">
            <svg viewBox="0 0 12 12" className="size-3"><path d="M3.500.5h8v8h-8z" fill="#fff" stroke="#4a5564" /><path d="M.5 3.500h8v8h-8z" fill="#fff" stroke="#4a5564" /><path d="M3.500 6h2v2.500h-2z" fill="#9ab" stroke="#4a5564" /></svg>
          </button>
          <button aria-label="关闭" className="flex w-[46px] items-center justify-center bg-linear-to-b from-[#e2a092] via-[#c44a36] to-[#d8705a]">
            <svg viewBox="0 0 12 10" className="h-2.5 w-3"><path d="M2 1l8 8M10 1L2 9" stroke="#5a3434" strokeWidth="4" /><path d="M2 1l8 8M10 1L2 9" stroke="#fff" strokeWidth="2.500" /></svg>
          </button>
        </div>
      </header>

      <nav className="flex h-[31px] shrink-0 items-center gap-px border-b border-[#b5cad9] bg-linear-to-b from-[#f8fbfe] to-[#e7edf5]">
        {menus.map((m) => (
          <button key={m} className="px-[7px] pt-1.5 leading-5">{m}</button>
        ))}
      </nav>

      <div className="flex h-[34px] shrink-0 items-center border-b border-[#b5cad9] pb-0.5" role="toolbar">
        {toolbar.map((group, g) => (
          <div key={g} className="flex items-center">
            <Grip />
            {group.map((n, i) =>
              n === "v" || n === "V" ? (
                <Caret key={i} dim={n === "v"} />
              ) : (
                <ToolButton key={i} name={n.replace("*", "")} pressed={n.endsWith("*")} />
              ),
            )}
          </div>
        ))}
      </div>

      <div className="flex h-[29px] shrink-0 border-t border-b border-t-white border-b-[#b5cad9]">
        <p className="flex flex-1 items-start gap-[5px] pt-px pl-1.5 leading-5">
          <span className="mt-[7px] size-[5px] rounded-full bg-[#1414c0]" />
          基准平面将不显示。
        </p>
        <div className="flex w-[31px] items-center justify-center border-r border-l border-[#bfd0dc]">
          <svg viewBox="0 0 12 20" className="h-5 w-3">
            <path d="M3.500.5h5v5h-5z" fill="#c88a90" stroke="#7c6468" />
            <path d="M3.500 5.500h5v5h-5z" fill="#f4ee9c" stroke="#7c7848" />
            <circle cx="6" cy="14.500" r="4.500" fill="#2fb13c" stroke="#124a18" />
            <path d="M4 13l2-1" stroke="#c8f8cc" strokeWidth="1.500" />
          </svg>
        </div>
        <div className="flex w-[390px] items-center justify-end pr-1">
          <div className="relative w-[286px]">
            <select aria-label="过滤器" className="block h-5 w-full appearance-none rounded-[3px] border border-[#829bad] bg-white pl-1 leading-4 text-[#222]">
              <option>智能</option>
            </select>
            <svg viewBox="0 0 8 5" className="pointer-events-none absolute top-2 right-1 h-1 w-1.5"><path d="M0 0h8L4 5z" fill={ink} /></svg>
          </div>
        </div>
      </div>

      <div className="flex min-h-0 flex-1">
        <ModelTree />
        <main className="min-w-0 flex-1 bg-linear-to-b from-[#c6dcec] via-[#8fabcd] to-[#5a79a6]">
          <HairDryer />
        </main>
        <FeatureBar />
      </div>

      <Taskbar />

      <div className="absolute top-[388px] -right-[29px] flex size-12 items-center rounded-full border-2 border-[#6c8c72] bg-linear-to-b from-[#7ad878] to-[#22a83c] pl-[3px] text-[13px] font-bold text-white shadow ring-1 ring-white ring-inset">
        51
      </div>
    </div>
  );
}
